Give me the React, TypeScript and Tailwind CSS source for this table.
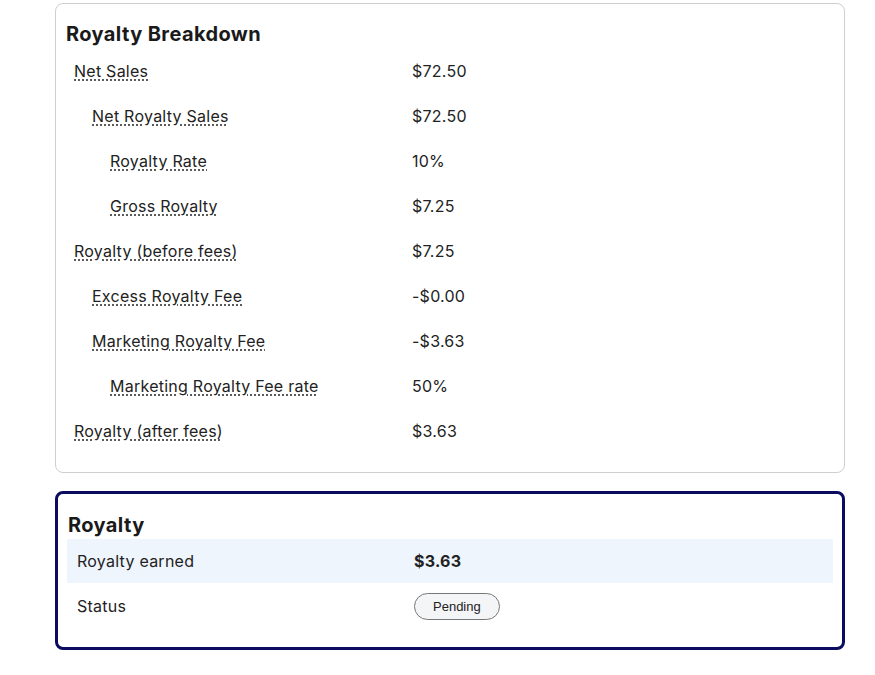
import React from "react";

const rows: { label: string; value: string; level: number }[] = [
  { label: "Net Sales", value: "$72.50", level: 0 },
  { label: "Net Royalty Sales", value: "$72.50", level: 1 },
  { label: "Royalty Rate", value: "10%", level: 2 },
  { label: "Gross Royalty", value: "$7.25", level: 2 },
  { label: "Royalty (before fees)", value: "$7.25", level: 0 },
  { label: "Excess Royalty Fee", value: "-$0.00", level: 1 },
  { label: "Marketing Royalty Fee", value: "-$3.63", level: 1 },
  { label: "Marketing Royalty Fee rate", value: "50%", level: 2 },
  { label: "Royalty (after fees)", value: "$3.63", level: 0 },
];

const indent = ["pl-[8px]", "pl-[26px]", "pl-[44px]"];

export default function App() {
  return (
    <div
      className="min-h-[675px] bg-white pl-[55px] pr-[30px] pt-[3px] text-[#222]"
      style={{ fontFamily: "Inter, 'Open Sans', sans-serif" }}
    >
      <section className="w-[790px] rounded-[8px] border border-[#cfcfcf] px-[10px] pb-[19px] pt-[16px]">
        <h2 className="text-[20px] font-bold leading-[28px] tracking-[0.4px] text-[#1a1a1a]">Royalty Breakdown</h2>
        <div>
          {rows.map((r) => (
            <div key={r.label} className="flex h-[45px] items-center text-[16px] tracking-[0.25px]">
              <div className={`w-[346px] shrink-0 ${indent[r.level]}`}>
                <span className="underline decoration-dotted decoration-[#333] underline-offset-[3px]">
                  {r.label}
                </span>
              </div>
              <div>{r.value}</div>
            </div>
          ))}
        </div>
      </section>

      <section className="mt-[18px] w-[790px] rounded-[8px] border-[3px] border-[#0b0b60] px-[9px] pb-[19px] pt-[17px]">
        <h2 className="pl-[1px] text-[20px] font-bold leading-[28px] tracking-[0.4px] text-[#1a1a1a]">Royalty</h2>
        <div className="flex h-[44px] items-center bg-[#eef5fd] text-[16px] tracking-[0.25px]">
          <div className="w-[347px] shrink-0 pl-[10px]">Royalty earned</div>
          <div className="font-bold">$3.63</div>
        </div>
        <div className="flex h-[45px] items-center text-[16px] tracking-[0.25px]">
          <div className="w-[347px] shrink-0 pl-[10px]">Status</div>
          <div className="pt-[2px]">
            <span
              className="inline-flex h-[27px] items-center rounded-full border border-[#777] bg-[#f4f5f7] px-[18px] text-[13px] tracking-normal text-[#222]"
              style={{ fontFamily: "Arial, 'Liberation Sans', sans-serif" }}
            >
              Pending
            </span>
          </div>
        </div>
      </section>
    </div>
  );
}
